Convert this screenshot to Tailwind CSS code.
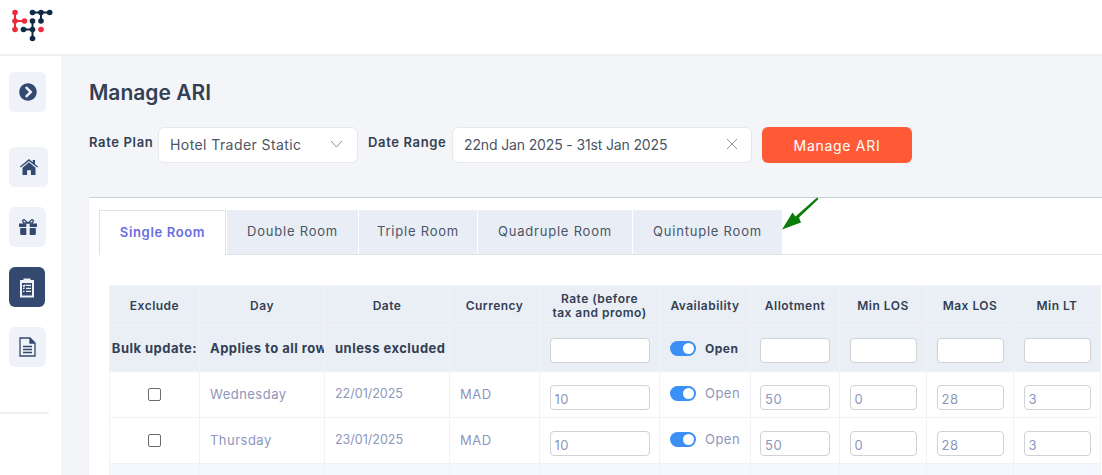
<!DOCTYPE html>
<html lang="en">
<head>
  <meta charset="UTF-8">
  <title>Manage ARI</title>
  <script src="https://cdn.jsdelivr.net/npm/@tailwindcss/browser@4"></script>
</head>
<body class="w-[1102px] h-[475px] overflow-hidden bg-white font-['Inter',sans-serif] relative">

  <!-- Header -->
  <header class="h-[56px] bg-white border-b-2 border-[#eef0f3] pl-[11px] pt-[9px]">
    <svg class="w-[44px] h-[34px]" viewBox="11 9 44 34">
      <path d="M15 12.500v17M15 21h9.500" fill="none" stroke="#ee2a3d" stroke-width="2"/>
      <g fill="#ee2a3d">
        <circle cx="15" cy="12.500" r="2.800"/><circle cx="15" cy="21" r="2.800"/><circle cx="15" cy="29.500" r="2.800"/><circle cx="24.500" cy="21" r="2.800"/>
        <circle cx="41" cy="29.500" r="2.800"/>
      </g>
      <path d="M32.500 12.500h17M41 12.500v8.500M32.500 21v17.500M23.500 29.500h9" fill="none" stroke="#0f2a44" stroke-width="2"/>
      <g fill="#0f2a44">
        <circle cx="32.500" cy="12.500" r="2.800"/><circle cx="41" cy="12.500" r="2.800"/><circle cx="49.700" cy="12.500" r="2.800"/><circle cx="41" cy="21" r="2.800"/>
        <circle cx="32.500" cy="21" r="2.800"/><circle cx="32.500" cy="29.500" r="2.800"/><circle cx="32.500" cy="38.500" r="2.800"/><circle cx="23.500" cy="29.500" r="2.800"/>
      </g>
    </svg>
  </header>

  <div class="flex h-[419px]">
    <!-- Sidebar -->
    <nav class="w-[61px] shrink-0 bg-white pt-4 flex flex-col">
      <button class="ml-[9px] w-[37px] h-[40px] rounded-md bg-[#eff2f8] flex items-center justify-center">
        <svg class="w-[18px] h-[18px]" viewBox="0 0 512 512" fill="#34496f"><path d="M256 8c137 0 248 111 248 248S393 504 256 504 8 393 8 256 119 8 256 8zm113.900 231L234.400 103.500c-9.400-9.400-24.600-9.400-33.900 0l-17 17c-9.400 9.400-9.400 24.600 0 33.900L285.100 256 183.500 357.600c-9.400 9.400-9.400 24.600 0 33.900l17 17c9.400 9.400 24.600 9.400 33.900 0L369.900 273c9.400-9.400 9.400-24.600 0-34z"/></svg>
      </button>
      <button class="ml-[9px] mt-[35px] w-[39px] h-[40px] rounded-md bg-[#eff2f8] flex items-center justify-center">
        <svg class="w-[18px] h-[16px]" viewBox="0 0 18 16" fill="#34496f"><path d="M9 0 0 7.600l.9 1L9 2l8.100 6.600.9-1L15 5.200V1h-2.300v2.300z"/><path d="M9 3.300 2.500 8.700V16h4.600v-4.800h3.800V16h4.600V8.700z"/></svg>
      </button>
      <button class="ml-[9px] mt-[20px] w-[37px] h-[40px] rounded-md bg-[#eff2f8] flex items-center justify-center">
        <svg class="w-[18px] h-[16px]" viewBox="0 0 18 16" fill="#34496f"><path d="M0 4.500h7.300V8H0zM10.700 4.500H18V8h-7.300zM1.200 9h6.100v7H2.500a1.300 1.300 0 0 1-1.300-1.300zM10.700 9h6.100v5.700a1.300 1.300 0 0 1-1.300 1.300h-4.800z"/><path d="M9 4 5 .6 3.600 1.500 4.500 4zM9 4l4-3.400 1.400.9-.9 2.500z" fill="none" stroke="#34496f" stroke-width="1.300"/></svg>
      </button>
      <button class="ml-[9px] mt-[20px] w-[36px] h-[40px] rounded-md bg-[#34496f] flex items-center justify-center">
        <svg class="w-[16px] h-[21px]" viewBox="0 0 16 21"><path d="M1 3h3.500V1.500h7V3H15v17.500H1z" fill="#eff2f8"/><path d="M3 6h10v12.500H3z" fill="#34496f"/><path d="M7 8.300h5M7 11.300h5M7 14.300h5M4 11.300h1.500M4 14.300h1.500M4 8.500l1 1 1.300-2" stroke="#eff2f8" stroke-width="1.200" fill="none"/></svg>
      </button>
      <button class="ml-[9px] mt-[20px] w-[37px] h-[40px] rounded-md bg-[#eff2f8] flex items-center justify-center">
        <svg class="w-[17px] h-[20px]" viewBox="0 0 17 20" fill="none" stroke="#34496f" stroke-width="1.300"><path d="M1 1h10l5 5v13H1z"/><path d="M11 1v5h5" fill="#34496f"/><path d="M4 9.500h9M4 12.500h9M4 15.500h9" stroke-width="1.500"/></svg>
      </button>
      <div class="mt-[45px] w-[49px] h-[2px] bg-[#eef0f3]"></div>
    </nav>

    <!-- Main -->
    <main class="flex-1 min-w-0 bg-[#f4f5f8] pl-7 overflow-hidden">
      <h1 class="mt-[22px] h-[30px] leading-[30px] text-[21px] font-semibold text-[#333f54]">Manage ARI</h1>

      <div class="mt-[19px] flex items-center h-[36px]">
        <label class="w-[69px] text-[13px] tracking-[0.05em] font-semibold text-[#333f54] -mt-[4px]">Rate Plan</label>
        <div class="w-[200px] h-[36px] pb-[2px] bg-white border border-[#e6e8ec] rounded-md flex items-center justify-between pl-[11px] pr-[14px] text-[14px] text-[#4b5565] tracking-[0.03em]">
          <span>Hotel Trader Static</span>
          <svg class="w-[13px] h-[8px]" viewBox="0 0 13 8" fill="none" stroke="#8b93a0" stroke-width="1"><path d="M1 1l5.500 6L12 1"/></svg>
        </div>
        <label class="ml-[10px] w-[84px] text-[13px] tracking-[0.05em] font-semibold text-[#333f54] -mt-[4px]">Date Range</label>
        <div class="w-[300px] h-[36px] pb-[2px] bg-white border border-[#e6e8ec] rounded-md flex items-center justify-between pl-[11px] pr-[13px] text-[14px] text-[#4b5565] tracking-[-0.01em]">
          <span>22nd Jan 2025 - 31st Jan 2025</span>
          <svg class="w-[12px] h-[12px]" viewBox="0 0 12 12" fill="none" stroke="#8b93a0" stroke-width="1"><path d="M1 1l10 10M11 1 1 11"/></svg>
        </div>
        <button class="ml-[10px] w-[150px] h-[36px] rounded-md bg-[#ff5a36] text-white text-[14px] tracking-[0.05em]">Manage ARI</button>
      </div>

      <!-- Panel -->
      <section class="mt-[34px] h-[280px] bg-white border-t border-[#c9d0db] pl-[10px] pt-[12px]">
        <div class="flex h-[45px] border-b border-[#dfe2e7] text-[13px] tracking-[0.06em] text-[#4b5565]">
          <div class="w-[127px] h-[45px] bg-white border border-b-0 border-[#dfe2e7] flex items-center justify-center font-semibold tracking-[0.05em] text-[#6a6de0]">Single Room</div>
          <div class="ml-px w-[131px] bg-[#e9eef6] flex items-center justify-center">Double Room</div>
          <div class="ml-px w-[118px] bg-[#e9eef6] flex items-center justify-center">Triple Room</div>
          <div class="ml-px w-[154px] bg-[#e9eef6] flex items-center justify-center">Quadruple Room</div>
          <div class="ml-px w-[149px] bg-[#e9eef6] flex items-center justify-center">Quintuple Room</div>
        </div>

        <table class="mt-[30px] ml-[10px] table-fixed border-collapse w-[991px] text-[12px] tracking-[0.04em]">
          <colgroup>
            <col class="w-[90px]"><col class="w-[125px]"><col class="w-[125px]"><col class="w-[90px]"><col class="w-[120px]"><col class="w-[91px]"><col class="w-[89px]"><col class="w-[87px]"><col class="w-[87px]"><col class="w-[87px]">
          </colgroup>
          <thead class="bg-[#eaeff6] text-[#333f54] font-semibold">
            <tr class="h-[40px] [&>th]:border [&>th]:border-[#f0f2f5] [&>th]:font-semibold [&>th]:leading-[14px]">
              <th>Exclude</th><th>Day</th><th>Date</th><th>Currency</th><th>Rate (before<br>tax and promo)</th><th>Availability</th><th>Allotment</th><th>Min LOS</th><th>Max LOS</th><th>Min LT</th>
            </tr>
            <tr class="h-[46px] [&>th]:border [&>th]:border-[#f0f2f5] [&>th]:font-bold">
              <th class="text-[13px] whitespace-nowrap overflow-hidden">Bulk update:</th>
              <th class="text-[13px] text-left pl-[10px] whitespace-nowrap overflow-hidden">Applies to all rows</th>
              <th class="text-[13px] text-left pl-[10px] whitespace-nowrap overflow-hidden">unless excluded</th>
              <th></th>
              <th><input class="block mx-auto mt-[4px] w-[100px] h-[25px] bg-white border border-[#cfd1d5] rounded-[4px]"></th>
              <th>
                <div class="flex items-center pl-[10px] gap-[9px]">
                  <span class="w-[26px] h-[15px] rounded-full bg-[#3b8ff5] flex items-center justify-end pr-[2px]"><span class="w-[11px] h-[11px] rounded-full bg-white"></span></span>
                  <span>Open</span>
                </div>
              </th>
              <th><input class="block mx-auto mt-[4px] w-[70px] h-[25px] bg-white border border-[#cfd1d5] rounded-[4px]"></th>
              <th><input class="block mx-auto mt-[4px] w-[67px] h-[25px] bg-white border border-[#cfd1d5] rounded-[4px]"></th>
              <th><input class="block mx-auto mt-[4px] w-[67px] h-[25px] bg-white border border-[#cfd1d5] rounded-[4px]"></th>
              <th><input class="block mx-auto mt-[4px] w-[67px] h-[25px] bg-white border border-[#cfd1d5] rounded-[4px]"></th>
            </tr>
          </thead>
          <tbody class="text-[13px] text-[#8d96bd]">
            <tr class="h-[46px] [&>td]:border [&>td]:border-[#f0f2f5]">
              <td><input type="checkbox" class="block mx-auto w-[13px] h-[13px] appearance-none border border-[#6b6b6b] rounded-[2px] bg-white"></td>
              <td class="pl-[10px]">Wednesday</td>
              <td class="pl-[10px] text-[12.500px] tracking-normal">22/01/2025</td>
              <td class="pl-[10px]">MAD</td>
              <td><input value="10" class="block mx-auto mt-[6px] w-[100px] h-[25px] px-[4px] pt-[2px] text-[#8d96bd] border border-[#cfd1d5] rounded-[4px]"></td>
              <td><div class="flex items-center pl-[10px] gap-[9px] -mt-[2px]"><span class="w-[26px] h-[15px] rounded-full bg-[#3b8ff5] flex items-center justify-end pr-[2px]"><span class="w-[11px] h-[11px] rounded-full bg-white"></span></span><span>Open</span></div></td>
              <td><input value="50" class="block mx-auto mt-[6px] w-[70px] h-[25px] px-[4px] pt-[2px] text-[#8d96bd] border border-[#cfd1d5] rounded-[4px]"></td>
              <td><input value="0" class="block mx-auto mt-[6px] w-[67px] h-[25px] px-[4px] pt-[2px] text-[#8d96bd] border border-[#cfd1d5] rounded-[4px]"></td>
              <td><input value="28" class="block mx-auto mt-[6px] w-[67px] h-[25px] px-[4px] pt-[2px] text-[#8d96bd] border border-[#cfd1d5] rounded-[4px]"></td>
              <td><input value="3" class="block mx-auto mt-[6px] w-[67px] h-[25px] px-[4px] pt-[2px] text-[#8d96bd] border border-[#cfd1d5] rounded-[4px]"></td>
            </tr>
            <tr class="h-[46px] [&>td]:border [&>td]:border-[#f0f2f5]">
              <td><input type="checkbox" class="block mx-auto w-[13px] h-[13px] appearance-none border border-[#6b6b6b] rounded-[2px] bg-white"></td>
              <td class="pl-[10px]">Thursday</td>
              <td class="pl-[10px] text-[12.500px] tracking-normal">23/01/2025</td>
              <td class="pl-[10px]">MAD</td>
              <td><input value="10" class="block mx-auto mt-[6px] w-[100px] h-[25px] px-[4px] pt-[2px] text-[#8d96bd] border border-[#cfd1d5] rounded-[4px]"></td>
              <td><div class="flex items-center pl-[10px] gap-[9px] -mt-[2px]"><span class="w-[26px] h-[15px] rounded-full bg-[#3b8ff5] flex items-center justify-end pr-[2px]"><span class="w-[11px] h-[11px] rounded-full bg-white"></span></span><span>Open</span></div></td>
              <td><input value="50" class="block mx-auto mt-[6px] w-[70px] h-[25px] px-[4px] pt-[2px] text-[#8d96bd] border border-[#cfd1d5] rounded-[4px]"></td>
              <td><input value="0" class="block mx-auto mt-[6px] w-[67px] h-[25px] px-[4px] pt-[2px] text-[#8d96bd] border border-[#cfd1d5] rounded-[4px]"></td>
              <td><input value="28" class="block mx-auto mt-[6px] w-[67px] h-[25px] px-[4px] pt-[2px] text-[#8d96bd] border border-[#cfd1d5] rounded-[4px]"></td>
              <td><input value="3" class="block mx-auto mt-[6px] w-[67px] h-[25px] px-[4px] pt-[2px] text-[#8d96bd] border border-[#cfd1d5] rounded-[4px]"></td>
            </tr>
            <tr class="h-[46px] bg-[#f2f8fd] [&>td]:border [&>td]:border-[#f0f2f5]">
              <td></td><td></td><td></td><td></td><td></td><td></td><td></td><td></td><td></td><td></td>
            </tr>
          </tbody>
        </table>
      </section>
    </main>
  </div>

  <!-- Annotation arrow drawn over the page -->
  <svg class="absolute left-[780px] top-[195px] w-[40px] h-[36px]" viewBox="780 195 40 36">
    <path d="M817 197.500 818.500 199 799 217.500 801 222.500 782 229.500 792.500 212.500 795.500 216.500z" fill="#0b7d0b"/>
  </svg>
</body>
</html>
